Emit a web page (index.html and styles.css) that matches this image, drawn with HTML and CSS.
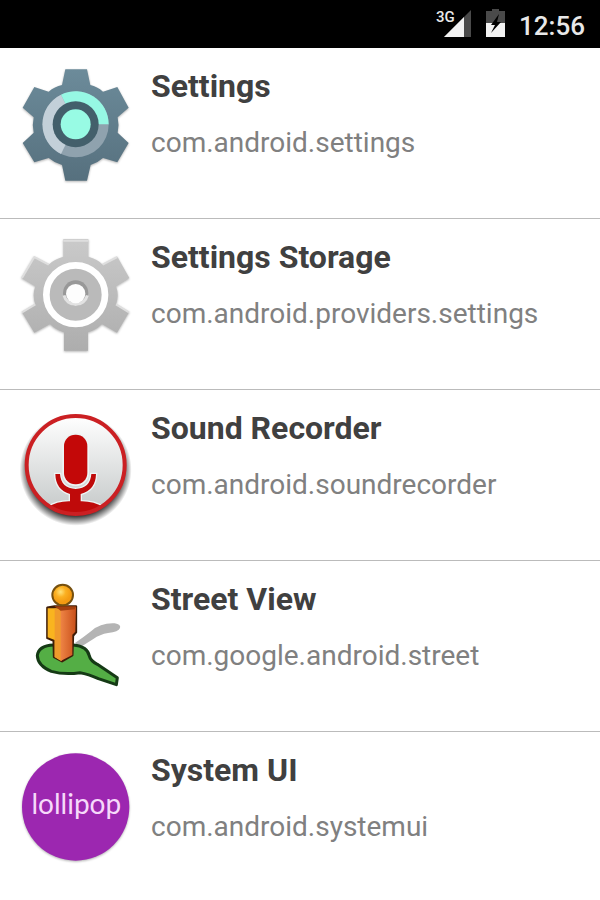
FILE: index.html
```html
<!DOCTYPE html>
<html lang="en">
<head>
  <meta charset="UTF-8" />
  <meta name="viewport" content="width=device-width, initial-scale=1.0" />
  <title>Installed Apps</title>
  <link rel="stylesheet" href="styles.css">
</head>
<body>
  <header class="status-bar">
    <svg class="signal" viewBox="-8 0 44 34" role="img" aria-label="3G signal">
      <path d="M31 1V28H4Z" fill="#4a4a4a" />
      <path d="M24 8V28H4Z" fill="#f2f2f2" />
      <text x="-4" y="13">3G</text>
    </svg>
    <svg class="battery" viewBox="0 0 20 34" role="img" aria-label="Battery charging">
      <path d="M6 0H13V2H19V14H0V2H6Z" fill="#4a4a4a" />
      <path d="M0 14H19V28H0Z" fill="#f2f2f2" />
      <path d="M13 5L5 16H9L5 24L15 13H11Z" fill="#000" />
    </svg>
    <time class="clock">12:56</time>
  </header>
  <main class="app-list">
    <article class="app-row">
      <svg class="app-icon" viewBox="15 27 360 360" aria-hidden="true">
        <defs>
          <linearGradient id="slate" x1="0" y1="0" x2="0" y2="1">
            <stop offset="0" stop-color="#6c8b9a" />
            <stop offset="1" stop-color="#56707e" />
          </linearGradient>
        </defs>
        <path class="soft-shadow" d="M166 40H231L241 87Q262 92 279 107L322 93L356 155L323 184Q328 206 323 230L356 261L322 319L279 306Q262 321 242 327L231 374H166L156 327Q134 321 116 306L73 319L38 261L71 230Q66 206 71 184L38 155L73 93L116 107Q134 92 156 87Z" fill="url(#slate)" />
        <circle cx="197" cy="205" r="99" fill="#8fa2ae" />
        <path d="M197 205L153 116A99 99 0 0 0 153 294Z" fill="#c3d0d9" />
        <path d="M197 205L153 116A99 99 0 0 1 296 205Z" fill="#96f8e4" />
        <circle cx="197" cy="205" r="69" fill="#435f6b" />
        <circle cx="197" cy="205" r="45" fill="#98fbe4" />
      </svg>
      <div class="app-info">
        <h2 class="app-name">Settings</h2>
        <p class="app-package">com.android.settings</p>
      </div>
    </article>
    <article class="app-row">
      <svg class="app-icon" viewBox="15 30 360 360" aria-hidden="true">
        <defs>
          <linearGradient id="silver" x1="0" y1="0" x2="0" y2="1">
            <stop offset="0" stop-color="#cacaca" />
            <stop offset="1" stop-color="#adadad" />
          </linearGradient>
        </defs>
        <g class="soft-shadow">
          <path d="M160 39H235V92Q263 99 278 116L322 92L358 156L318 181Q328 208 318 235L357 259L321 320L276 294Q260 311 234 319V374H162V319Q136 311 120 294L73 320L36 259L76 235Q66 208 76 181L35 156L73 92L116 116Q133 99 160 92Z" fill="url(#silver)" />
          <path d="M160 44H235M36 156L73 93L116 116M278 116L322 93M36 259L76 235M318 235L357 259" fill="none" stroke="#dedede" stroke-width="6" />
        </g>
        <circle cx="197" cy="206" r="88" fill="#bababa" stroke="#fff" stroke-width="20" />
        <circle cx="197" cy="201" r="38" fill="#989898" />
        <path d="M162 208A36 36 0 0 0 232 208" fill="none" stroke="#e2e2e2" stroke-width="9" />
        <circle cx="197" cy="203" r="29" fill="#fdfdfd" />
      </svg>
      <div class="app-info">
        <h2 class="app-name">Settings Storage</h2>
        <p class="app-package">com.android.providers.settings</p>
      </div>
    </article>
    <article class="app-row">
      <svg class="app-icon" viewBox="15 21 360 360" aria-hidden="true">
        <defs>
          <linearGradient id="plate" x1="0" y1="0" x2="0" y2="1">
            <stop offset="0" stop-color="#ffffff" />
            <stop offset="1" stop-color="#c4c8c8" />
          </linearGradient>
          <radialGradient id="glow">
            <stop offset="0.82" stop-color="#000" stop-opacity="0.8" />
            <stop offset="1" stop-color="#000" stop-opacity="0" />
          </radialGradient>
          <clipPath id="disc"><circle cx="197" cy="195" r="147" /></clipPath>
        </defs>
        <circle cx="197" cy="209" r="168" fill="url(#glow)" />
        <circle cx="197" cy="195" r="147" fill="url(#plate)" />
        <g clip-path="url(#disc)">
          <path d="M112 350V322Q142 303 180 304V282Q137 270 136 222H150Q153 265 197 267Q241 265 244 222H258Q257 270 212 282V304Q250 303 282 322V350Z" fill="#bf0a0a" stroke="#eef4f4" stroke-width="8" paint-order="stroke" />
        </g>
        <rect x="162" y="104" width="70" height="149" rx="34" fill="#c30808" stroke="#eef4f4" stroke-width="10" paint-order="stroke" />
        <circle cx="197" cy="195" r="147" fill="none" stroke="#cb2023" stroke-width="12" />
      </svg>
      <div class="app-info">
        <h2 class="app-name">Sound Recorder</h2>
        <p class="app-package">com.android.soundrecorder</p>
      </div>
    </article>
    <article class="app-row">
      <svg class="app-icon" viewBox="-15 24 360 360" aria-hidden="true">
        <defs>
          <radialGradient id="head" cx="0.4" cy="0.35">
            <stop offset="0" stop-color="#ffe27a" />
            <stop offset="0.5" stop-color="#fbb022" />
            <stop offset="1" stop-color="#f39a12" />
          </radialGradient>
          <linearGradient id="side">
            <stop offset="0" stop-color="#ee8445" />
            <stop offset="1" stop-color="#c9501a" />
          </linearGradient>
        </defs>
        <path d="M165 219Q190 202 214 183Q242 158 284 160Q304 164 300 174Q296 186 264 189Q240 193 220 207L182 231Z" fill="#b4b4b4" />
        <path d="M101 225Q55 227 52 257Q53 287 94 304Q133 315 180 308Q205 312 235 326L289 344L292 323L232 283Q212 273 208 258Q203 229 160 225Z" fill="#54ae45" stroke="#153a15" stroke-width="9" stroke-linejoin="round" />
        <path d="M82 113L104 109H168L168 187L159 197L157 256L126 274L102 261L101 212L82 204Z" fill="#3f1d08" stroke="#3f1d08" stroke-width="7" stroke-linejoin="round" />
        <path d="M83 115H122V272L104 261V210L83 202Z" fill="#f9b41f" />
        <path d="M104 115L125 122V273L104 261Z" fill="#f09a2c" />
        <path d="M122 120L168 111L166 185L157 194V255L122 273Z" fill="url(#side)" />
        <path d="M103 109H168L164 118L122 122Z" fill="#a4400f" />
        <circle cx="128" cy="75" r="31" fill="url(#head)" stroke="#76500f" stroke-width="6" />
      </svg>
      <div class="app-info">
        <h2 class="app-name">Street View</h2>
        <p class="app-package">com.google.android.street</p>
      </div>
    </article>
    <article class="app-row">
      <svg class="app-icon" viewBox="15 27 360 360" aria-hidden="true">
        <circle class="soft-shadow" cx="197" cy="201" r="161" fill="#9c27b0" />
        <text class="lollipop" x="199" y="222" text-anchor="middle">lollipop</text>
      </svg>
      <div class="app-info">
        <h2 class="app-name">System UI</h2>
        <p class="app-package">com.android.systemui</p>
      </div>
    </article>
  </main>
</body>
</html>
```

FILE: styles.css
```css
* {
  box-sizing: border-box;
}
body {
  margin: 0;
  height: 100vh;
  display: flex;
  flex-direction: column;
  overflow: hidden;
  font-family: Roboto, sans-serif;
  background: #fff;
  color: #404040;
}
.status-bar {
  flex: none;
  display: flex;
  align-items: center;
  justify-content: flex-end;
  height: 48px;
  padding: 4px 15px 0;
  background: #000;
  color: #e8e8e8;
}
.signal {
  width: 44px;
  height: 34px;
  margin-right: 10px;
}
.signal text {
  font-size: 15px;
  font-weight: 500;
  fill: #e8e8e8;
  stroke: #000;
  stroke-width: 2px;
  paint-order: stroke;
}
.battery {
  width: 20px;
  height: 34px;
  margin-right: 13px;
}
.clock {
  font-size: 26px;
  font-weight: 500;
  line-height: 44px;
}
.app-list {
  flex: 1;
  min-height: 0;
  overflow: hidden;
}
.app-row {
  display: flex;
  gap: 16px;
  padding: 17px 15px 33px;
  border-bottom: 1px solid #bbb;
}
.app-icon {
  flex: none;
  width: 120px;
  height: 120px;
}
.soft-shadow {
  filter: drop-shadow(0 3px 3px rgba(0, 0, 0, 0.3));
}
.lollipop {
  font-family: Lato, sans-serif;
  font-size: 84px;
  font-weight: 400;
  fill: #f6d9fa;
}
.app-info {
  flex: 1;
  min-width: 0;
}
.app-name {
  margin: 0 0 18px;
  font-size: 32px;
  font-weight: 700;
  line-height: 42px;
}
.app-package {
  margin: 0;
  font-size: 28px;
  line-height: 36px;
  color: #808080;
}
```
